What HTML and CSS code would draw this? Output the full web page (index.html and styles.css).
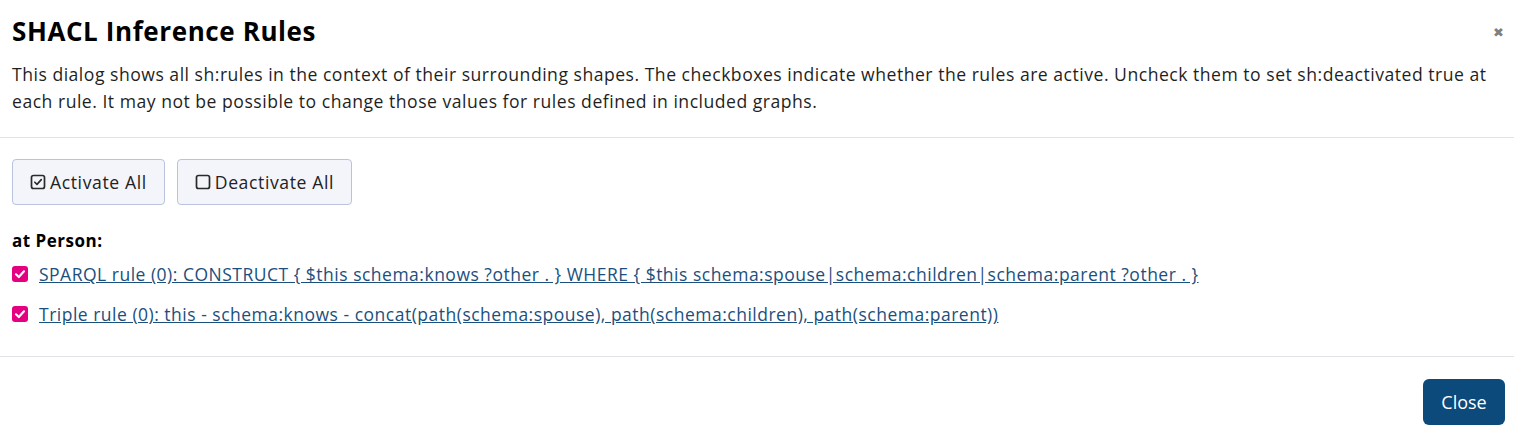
FILE: index.html
```html
<!DOCTYPE html>
<html>
<head>
<meta charset="utf-8">
<link rel="stylesheet" href="styles.css">
</head>
<body>
<div class="dialog">
  <div class="header">
    <div class="title-row">
      <h1 class="title">SHACL Inference Rules</h1>
      <span class="close-x">&#x2716;</span>
    </div>
    <p class="intro">This dialog shows all sh:rules in the context of their surrounding shapes. The checkboxes indicate whether the rules are active. Uncheck them to set sh:deactivated true at each rule. It may not be possible to change those values for rules defined in included graphs.</p>
  </div>
  <div class="content">
    <div class="toolbar">
      <button class="btn">
        <svg class="ico" viewBox="0 0 16 16" width="16" height="16"><rect x="1.5" y="1.5" width="13" height="13" rx="2" fill="none" stroke="#2a2a2a" stroke-width="1.7"/><path d="M4.8 8.2 L7 10.4 L11.3 5.6" fill="none" stroke="#2a2a2a" stroke-width="1.6" stroke-linecap="round" stroke-linejoin="round"/></svg>
        <span>Activate All</span>
      </button>
      <button class="btn">
        <svg class="ico" viewBox="0 0 16 16" width="16" height="16"><rect x="1.5" y="1.5" width="13" height="13" rx="2" fill="none" stroke="#2a2a2a" stroke-width="1.7"/></svg>
        <span>Deactivate All</span>
      </button>
    </div>
    <div class="shape-label">at Person:</div>
    <div class="rule first">
      <span class="cb"><svg viewBox="0 0 16 16" width="16" height="16"><path d="M4 8.3 L6.8 11 L12 5.3" fill="none" stroke="#fff" stroke-width="2.2" stroke-linecap="round" stroke-linejoin="round"/></svg></span>
      <a class="link" href="#">SPARQL rule (0): CONSTRUCT { $this schema:knows ?other . } WHERE { $this schema:spouse|schema:children|schema:parent ?other . }</a>
    </div>
    <div class="rule">
      <span class="cb"><svg viewBox="0 0 16 16" width="16" height="16"><path d="M4 8.3 L6.8 11 L12 5.3" fill="none" stroke="#fff" stroke-width="2.2" stroke-linecap="round" stroke-linejoin="round"/></svg></span>
      <a class="link" href="#">Triple rule (0): this - schema:knows - concat(path(schema:spouse), path(schema:children), path(schema:parent))</a>
    </div>
  </div>
  <div class="footer">
    <button class="close-btn">Close</button>
  </div>
</div>
</body>
</html>
```
FILE: styles.css
```css
html, body {
  margin: 0;
  padding: 0;
  background: #fff;
}
body {
  font-family: "Open Sans", "Noto Sans", sans-serif;
  color: #1f1f1f;
  letter-spacing: 0.5px;
}
.dialog {
  width: 1514px;
}
.header {
  padding: 14px 10px 22px 12px;
  border-bottom: 1px solid #e1e3e8;
}
.title-row {
  display: flex;
  align-items: center;
  justify-content: space-between;
}
.title {
  margin: 0;
  font-size: 26px;
  line-height: 34px;
  font-weight: 700;
  color: #000;
  letter-spacing: 0.6px;
}
.close-x {
  color: #808080;
  font-size: 13px;
  margin-top: 3px;
  font-family: "DejaVu Sans", sans-serif;
  letter-spacing: 0;
}
.intro {
  margin: 13px 0 0 0;
  font-size: 17.6px;
  line-height: 27px;
  color: #1f1f1f;
}
.content {
  padding: 21px 12px 28px 12px;
  border-bottom: 1px solid #e1e3e8;
}
.toolbar {
  display: flex;
  gap: 12px;
}
.btn {
  display: flex;
  align-items: center;
  gap: 4px;
  height: 46px;
  padding: 0 17px 0 17px;
  background: #f4f5fa;
  border: 1px solid #b9c3dc;
  border-radius: 4px;
  font-family: inherit;
  font-size: 17.6px;
  letter-spacing: 0.6px;
  color: #222;
}
.ico {
  display: block;
}
.shape-label {
  margin-top: 25px;
  font-weight: 700;
  font-size: 17px;
  line-height: 22px;
  color: #000;
}
.rule {
  display: flex;
  align-items: center;
  gap: 11px;
  margin-top: 12px;
  height: 28px;
}
.rule.first {
  margin-top: 8px;
}
.cb {
  width: 16px;
  height: 16px;
  background: #e4007f;
  border-radius: 3px;
  display: flex;
  flex: none;
}
.link {
  color: #1b4f7d;
  font-size: 17.5px;
  text-decoration: underline;
}
.footer {
  display: flex;
  justify-content: flex-end;
  padding: 22px 9px 10px 0;
}
.close-btn {
  background: #0b4a7a;
  color: #fff;
  border: none;
  border-radius: 6px;
  width: 82px;
  height: 46px;
  font-family: "Open Sans", sans-serif;
  font-size: 18px;
  letter-spacing: 0;
}
```
